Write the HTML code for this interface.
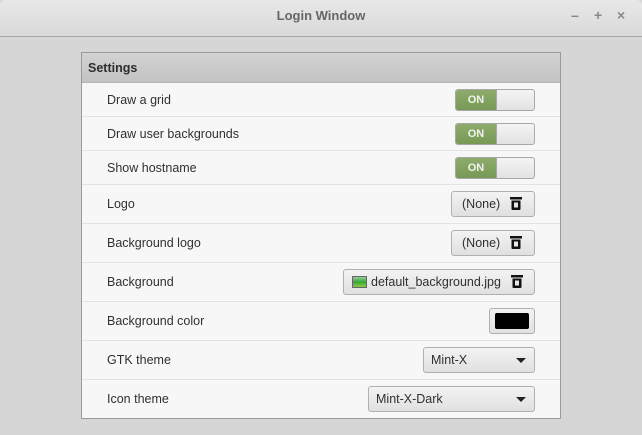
<!DOCTYPE html>
<html><head><style>
*{box-sizing:border-box;margin:0;padding:0}
body{width:642px;height:435px;overflow:hidden;background:#d6d6d6;font-family:"Liberation Sans","DejaVu Sans",sans-serif;font-size:12.5px;color:#303030;position:relative}
.tb{position:absolute;left:0;top:0;width:642px;height:37px;background:linear-gradient(#e8e8e8,#d9d9d9);border-bottom:1px solid #a8a8a8;border-radius:5px 5px 0 0}
.tb .t{position:absolute;left:0;right:0;top:8px;text-align:center;font-weight:bold;font-size:13px;color:#666}
.tb .b{position:absolute;top:7px;font-size:14px;color:#888;font-weight:bold}
.fr{position:absolute;left:81px;top:52px;width:480px;height:367px;border:1px solid #9a9a9a;background:#f7f7f7}
.hd{height:30px;background:linear-gradient(#d2d2d2,#c3c3c3);border-bottom:1px solid #b4b4b4;font-weight:bold;font-size:12.5px;padding:8px 0 0 6px;color:#2e2e2e}
.r{position:relative;border-bottom:1px solid #e2e2e2}
.r:last-child{border-bottom:none}
.r .l{position:absolute;left:25px;top:50%;transform:translateY(-50%)}
.tg{position:absolute;right:25px;top:6px;width:80px;height:22px;border:1px solid #a8a8a8;border-radius:3px;background:linear-gradient(#f4f4f4,#e2e2e2);overflow:hidden}
.tg .on{position:absolute;left:0;top:0;width:41px;height:100%;background:linear-gradient(#8eab6b,#789a55);color:#f2f2f2;font-weight:bold;font-size:11px;text-align:center;line-height:20px;border-right:1px solid #a8a8a8}
.bt{position:absolute;right:25px;top:50%;transform:translateY(-50%);height:26px;border:1px solid #b0b0b0;border-radius:3px;background:linear-gradient(#f3f3f3,#e0e0e0);line-height:24px;padding:0 10px}
.ic{display:inline-block;vertical-align:-2px;margin-left:10px}
.dd{position:absolute;right:25px;top:50%;transform:translateY(-50%);height:26px;border:1px solid #b0b0b0;border-radius:3px;background:linear-gradient(#f3f3f3,#e0e0e0);line-height:24px;padding-left:7px}
.dd:after{content:"";position:absolute;right:8px;top:10px;border-left:5px solid transparent;border-right:5px solid transparent;border-top:5px solid #222}
</style></head><body>
<div class="tb"><div class="t">Login Window</div><span class="b" style="left:571px">–</span><span class="b" style="left:594px">+</span><span class="b" style="left:617px">×</span></div>
<div class="fr">
<div class="hd">Settings</div>
<div class="r" style="height:34px"><span class="l">Draw a grid</span><div class="tg"><div class="on">ON</div></div></div>
<div class="r" style="height:34px"><span class="l">Draw user backgrounds</span><div class="tg"><div class="on">ON</div></div></div>
<div class="r" style="height:34px"><span class="l">Show hostname</span><div class="tg"><div class="on">ON</div></div></div>
<div class="r" style="height:39px"><span class="l">Logo</span><div class="bt" style="width:84px">(None)<svg class="ic" width="12" height="13" viewBox="0 0 12 13"><rect x="0" y="0" width="12" height="2.5" fill="#111"/><path d="M1.5 3.5h9v8.5a1 1 0 0 1-1 1h-7a1 1 0 0 1-1-1z M4 5.5v5h4v-5z" fill="#111" fill-rule="evenodd"/></svg></div></div>
<div class="r" style="height:39px"><span class="l">Background logo</span><div class="bt" style="width:84px">(None)<svg class="ic" width="12" height="13" viewBox="0 0 12 13"><rect x="0" y="0" width="12" height="2.5" fill="#111"/><path d="M1.5 3.5h9v8.5a1 1 0 0 1-1 1h-7a1 1 0 0 1-1-1z M4 5.5v5h4v-5z" fill="#111" fill-rule="evenodd"/></svg></div></div>
<div class="r" style="height:39px"><span class="l">Background</span><div class="bt" style="width:192px;padding-left:8px"><span style="display:inline-block;width:15px;height:12px;background:linear-gradient(#9c9,#3a3 50%,#8c4);border:1px solid #666;vertical-align:-2px;margin-right:4px"></span>default_background.jpg<svg class="ic" width="12" height="13" viewBox="0 0 12 13"><rect x="0" y="0" width="12" height="2.5" fill="#111"/><path d="M1.5 3.5h9v8.5a1 1 0 0 1-1 1h-7a1 1 0 0 1-1-1z M4 5.5v5h4v-5z" fill="#111" fill-rule="evenodd"/></svg></div></div>
<div class="r" style="height:39px"><span class="l">Background color</span><div class="bt" style="width:46px;padding:4px 5px"><div style="width:100%;height:16px;background:#000;border-radius:2px"></div></div></div>
<div class="r" style="height:39px"><span class="l">GTK theme</span><div class="dd" style="width:112px">Mint-X</div></div>
<div class="r" style="height:38px"><span class="l">Icon theme</span><div class="dd" style="width:167px">Mint-X-Dark</div></div>
</div>
</body></html>
